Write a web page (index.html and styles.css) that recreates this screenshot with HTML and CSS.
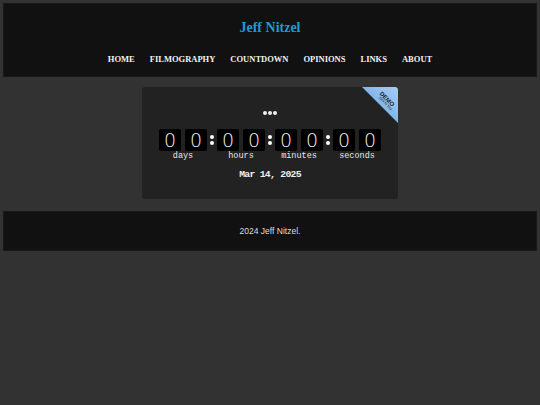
FILE: index.html
```html
<!DOCTYPE html>
<html>
<head>
<meta charset="utf-8">
<link rel="stylesheet" href="styles.css">
</head>
<body>
<div class="page">
  <header class="header">
    <h1 class="title">Jeff Nitzel</h1>
    <nav class="nav">
      <a>HOME</a><a>FILMOGRAPHY</a><a>COUNTDOWN</a><a>OPINIONS</a><a>LINKS</a><a>ABOUT</a>
    </nav>
  </header>
  <main class="card">
    <div class="ribbon"><span class="r1">DEMO</span><span class="r2">click to buy</span></div>
    <div class="dots"><i></i><i></i><i></i></div>
    <div class="counter">
      <div class="group"><div class="digits"><span class="d">0</span><span class="d">0</span></div><div class="lbl">days</div></div>
      <div class="sep"><i></i><i></i></div>
      <div class="group"><div class="digits"><span class="d">0</span><span class="d">0</span></div><div class="lbl">hours</div></div>
      <div class="sep"><i></i><i></i></div>
      <div class="group"><div class="digits"><span class="d">0</span><span class="d">0</span></div><div class="lbl">minutes</div></div>
      <div class="sep"><i></i><i></i></div>
      <div class="group"><div class="digits"><span class="d">0</span><span class="d">0</span></div><div class="lbl">seconds</div></div>
    </div>
    <div class="date">Mar 14, 2025</div>
  </main>
  <footer class="footer">2024 Jeff Nitzel.</footer>
</div>
</body>
</html>
```
FILE: styles.css
```css
html, body { margin: 0; padding: 0; background: #323232; }
.page { padding: 3px; display: flex; flex-direction: column; align-items: center; }
.header { width: 100%; box-sizing: border-box; height: 74px; background: #111; border: 1px solid #181818; display: flex; flex-direction: column; align-items: center; }
.title { margin: 15px 0 0; font-family: "Liberation Serif", serif; font-weight: bold; font-size: 14px; line-height: 18px; color: #1e9ad6; }
.nav { margin-top: 16px; display: flex; gap: 15px; font-family: "Liberation Serif", serif; font-weight: bold; font-size: 8.5px; line-height: 12px; color: #f2f2f2; }
.card { position: relative; overflow: hidden; margin-top: 10px; width: 256px; height: 112px; box-sizing: border-box; background: #222; border-radius: 3px; display: flex; flex-direction: column; align-items: center; }
.ribbon { position: absolute; top: 0; right: 0; width: 36px; height: 36px; background: linear-gradient(225deg, #a9cdf2, #5f9ee0); clip-path: polygon(0 0, 100% 0, 100% 100%); }
.ribbon .r1, .ribbon .r2 { position: absolute; transform: rotate(45deg); font-family: "Liberation Sans", sans-serif; color: #1a2230; white-space: nowrap; line-height: 1; }
.r1 { font-size: 6px; font-weight: bold; top: 9px; left: 16px; }
.r2 { font-size: 3.6px; top: 15px; left: 14px; }
.dots { margin-top: 24px; display: flex; gap: 1px; height: 4px; }
.dots i { width: 4px; height: 4px; border-radius: 50%; background: #eee; }
.counter { margin-top: 14px; display: flex; align-items: flex-start; }
.group { display: flex; flex-direction: column; align-items: center; }
.digits { display: flex; gap: 4px; }
.d { width: 22px; height: 22px; background: #000; border-radius: 2px; color: #f4f4f4; font-family: "DejaVu Sans", sans-serif; font-weight: 200; font-size: 19px; line-height: 22px; text-align: center; }
.sep { width: 10px; height: 22px; display: flex; flex-direction: column; align-items: center; justify-content: center; gap: 2px; }
.sep i { width: 4px; height: 4px; border-radius: 50%; background: #fff; }
.lbl { margin-top: 0; font-family: "Liberation Mono", monospace; font-size: 8.5px; line-height: 10px; color: #e8e8e8; }
.date { margin-top: 7px; font-family: "Liberation Mono", monospace; font-weight: bold; font-size: 9.8px; letter-spacing: -0.75px; line-height: 14px; color: #eee; }
.footer { margin-top: 12px; width: 100%; box-sizing: border-box; height: 40px; background: #111; border: 1px solid #181818; font-family: "Liberation Sans", sans-serif; font-size: 8.5px; color: #ddd; display: flex; align-items: center; justify-content: center; }
```
